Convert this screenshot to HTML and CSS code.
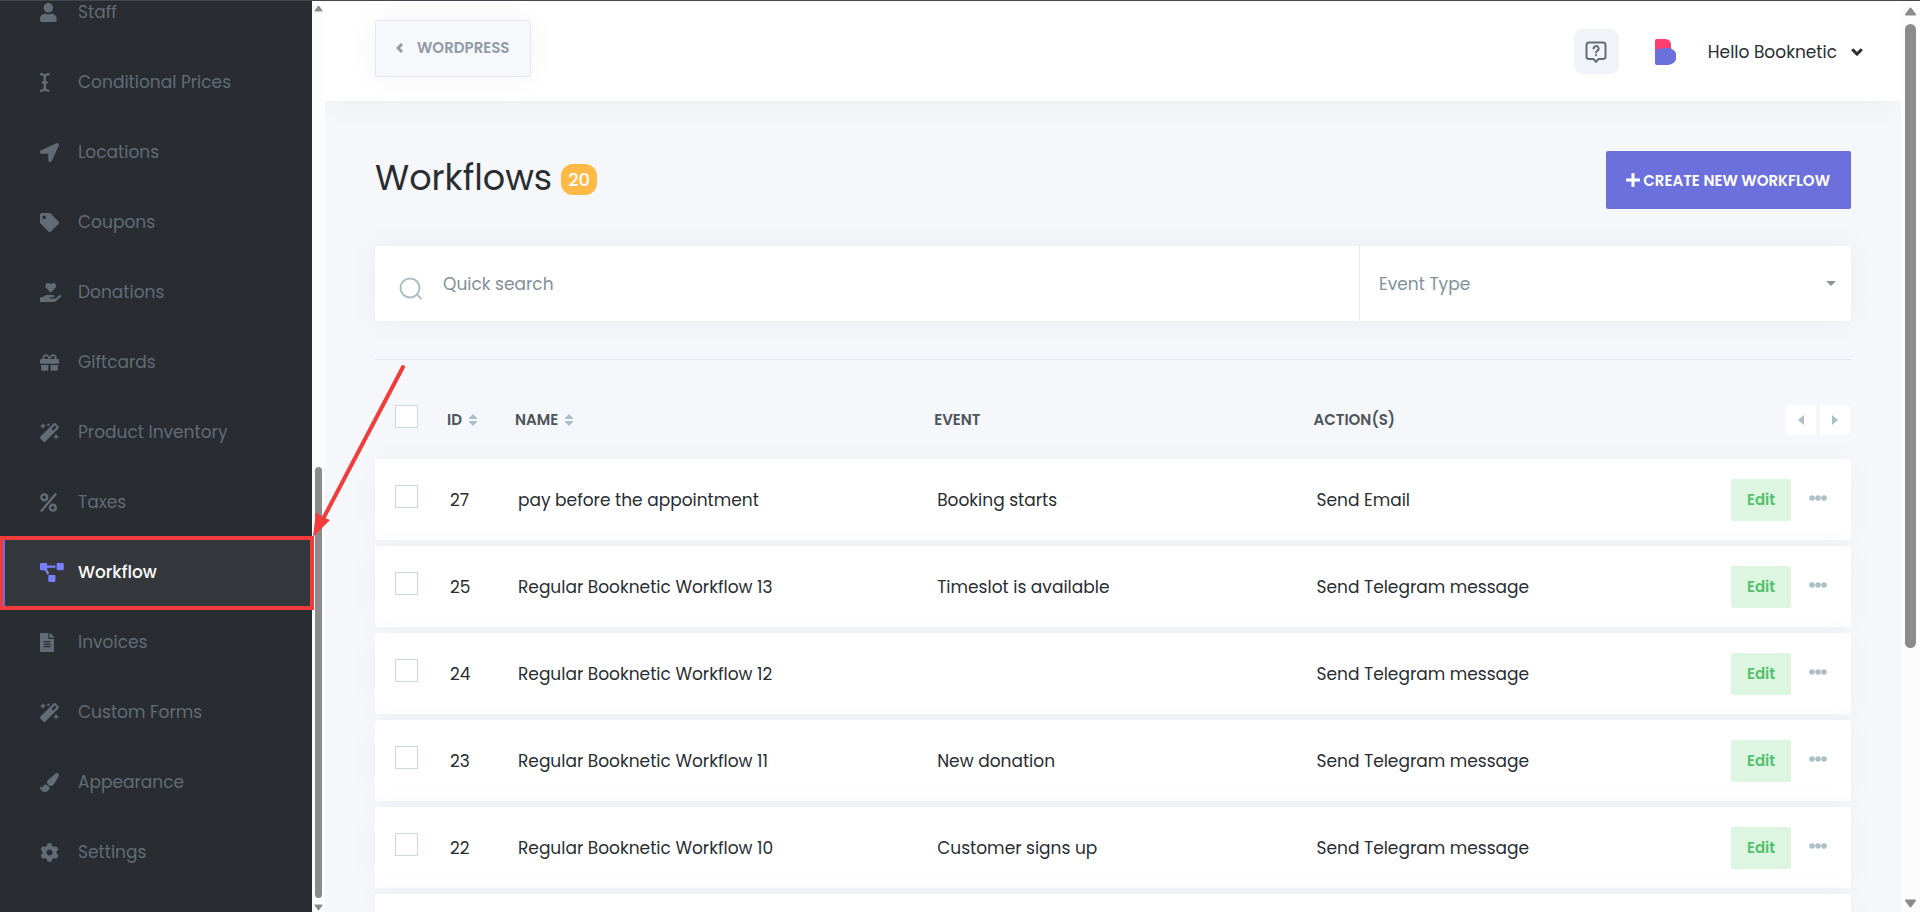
FILE: index.html
```html
<!DOCTYPE html>
<html lang="en">
<head>
    <meta charset="UTF-8">
    <meta name="viewport" content="width=device-width, initial-scale=1.0">
    <title>Booknetic - Workflows</title>
    <link rel="stylesheet" href="styles.css">
</head>
<body>
    <svg class="sprite" aria-hidden="true">
        <symbol id="magic" viewBox="0 0 512 512"><path d="M224 96l16-32 32-16-32-16-16-32-16 32-32 16 32 16 16 32zM80 160l26.66-53.33L160 80l-53.34-26.67L80 0 53.34 53.33 0 80l53.34 26.67L80 160zm352 128l-26.66 53.33L352 368l53.34 26.67L432 448l26.66-53.33L512 368l-53.34-26.67L432 288zm70.62-193.77L417.77 9.38C411.53 3.12 403.34 0 395.15 0c-8.19 0-16.38 3.12-22.63 9.38L9.38 372.52c-12.5 12.5-12.5 32.76 0 45.25l84.85 84.85c6.25 6.25 14.44 9.37 22.62 9.37 8.19 0 16.38-3.12 22.63-9.37l363.14-363.15c12.5-12.48 12.5-32.75 0-45.24zM359.45 203.46l-50.91-50.91 86.6-86.6 50.91 50.91-86.6 86.6z"/></symbol>
        <symbol id="dots" viewBox="0 0 18 6"><circle cx="3" cy="3" r="2.8"/><circle cx="9" cy="3" r="2.8"/><circle cx="15" cy="3" r="2.8"/></symbol>
        <symbol id="sort" viewBox="0 0 10 12"><path d="M5 0l4 4q.8 1-.4 1H1.400Q.2 5 1 4zM5 12l4-4q.8-1-.4-1H1.400Q.2 7 1 8z"/></symbol>
    </svg>

    <div class="app">
        <nav class="sidebar">
            <ul class="menu">
                <li><a href="#"><svg viewBox="0 0 448 512"><path d="M224 256c70.7 0 128-57.3 128-128S294.7 0 224 0 96 57.3 96 128s57.3 128 128 128zm89.6 32h-16.7c-22.2 10.2-46.9 16-72.9 16s-50.6-5.8-72.9-16h-16.7C60.2 288 0 348.2 0 422.4V464c0 26.5 21.5 48 48 48h352c26.5 0 48-21.5 48-48v-41.6c0-74.2-60.2-134.4-134.4-134.4z"/></svg><span>Staff</span></a></li>
                <li><a href="#"><svg viewBox="0 0 256 512"><path d="M256 52.048V12.065C256 5.496 250.726.148 244.158.019 211.621-.613 166.469.011 128 37.959 90.266.736 46.979-.114 11.913.114 5.318.157 0 5.519 0 12.114v39.645c0 6.687 5.458 12.078 12.145 11.998C38.111 63.447 96 67.243 96 112.182V224H60c-6.627 0-12 5.373-12 12v40c0 6.627 5.373 12 12 12h36v112c0 44.932-56.075 48.031-83.95 47.959C5.404 447.942 0 453.306 0 459.952v39.983c0 6.569 5.274 11.917 11.842 12.045 32.537.631 77.689.008 116.158-37.94 37.734 37.223 81.021 38.073 116.087 37.845 6.595-.043 11.913-5.405 11.913-12V460.24c0-6.687-5.458-12.078-12.145-11.998C217.889 448.553 160 444.939 160 400V288h36c6.627 0 12-5.373 12-12v-40c0-6.627-5.373-12-12-12h-36V112.182c0-44.932 56.075-48.213 83.95-48.142 6.646.018 12.05-5.346 12.05-11.992z"/></svg><span>Conditional Prices</span></a></li>
                <li><a href="#"><svg viewBox="0 0 512 512"><path d="M444.52 3.52L28.74 195.42c-47.97 22.39-31.98 92.75 19.19 92.75h175.910v175.910c0 51.17 70.36 67.170 92.750 19.190l191.900-415.780c15.990-38.390-25.590-79.970-63.970-63.970z"/></svg><span>Locations</span></a></li>
                <li><a href="#"><svg viewBox="0 0 512 512"><path d="M0 252.118V48C0 21.49 21.49 0 48 0h204.118a48 48 0 0 1 33.941 14.059l211.882 211.882c18.745 18.745 18.745 49.137 0 67.882L293.823 497.941c-18.745 18.745-49.137 18.745-67.882 0L14.059 286.059A48 48 0 0 1 0 252.118zM112 64c-26.51 0-48 21.49-48 48s21.49 48 48 48 48-21.49 48-48-21.49-48-48-48z"/></svg><span>Coupons</span></a></li>
                <li><a href="#"><svg viewBox="0 0 576 512"><path d="M275.3 250.5c7 7.4 18.4 7.4 25.5 0l108.9-114.2c31.6-33.2 29.8-88.2-5.6-118.8-30.8-26.7-76.7-21.9-104.9 7.7L288 36.9l-11.1-11.6C248.7-4.4 202.8-9.2 172 17.5c-35.3 30.6-37.2 85.6-5.6 118.8l108.9 114.2zm290 77.6c-11.8-10.7-30.2-10-42.6 0L430.3 402c-11.3 9.1-25.4 14-40 14H272c-8.8 0-16-7.2-16-16s7.200-16 16-16h78.3c15.9 0 30.7-10.9 33.3-26.6 3.3-20-12.1-37.4-31.6-37.4H192c-27 0-53.1 9.3-74.1 26.3L71.4 384H16c-8.8 0-16 7.2-16 16v96c0 8.8 7.2 16 16 16h356.8c14.5 0 28.6-4.9 40-14L564 377c15.2-12.1 16.4-35.3 1.3-48.9z"/></svg><span>Donations</span></a></li>
                <li><a href="#"><svg viewBox="0 0 512 512"><path d="M32 448c0 17.7 14.3 32 32 32h160V320H32v128zm256 32h160c17.7 0 32-14.3 32-32V320H288v160zm192-320h-42.1c6.2-12.1 10.1-25.5 10.1-40 0-48.5-39.5-88-88-88-41.6 0-68.5 21.3-103 68.3-34.5-47-61.4-68.3-103-68.3-48.5 0-88 39.5-88 88 0 14.5 3.8 27.9 10.1 40H32c-17.7 0-32 14.3-32 32v80c0 8.8 7.2 16 16 16h480c8.8 0 16-7.2 16-16v-80c0-17.7-14.3-32-32-32zm-326.1 0c-22.1 0-40-17.9-40-40s17.9-40 40-40c19.9 0 34.6 3.3 86.1 80h-86.1zm206.1 0h-86.1c51.4-76.5 65.7-80 86.1-80 22.1 0 40 17.9 40 40s-17.9 40-40 40z"/></svg><span>Giftcards</span></a></li>
                <li><a href="#"><svg viewBox="0 0 512 512"><use href="#magic"/></svg><span>Product Inventory</span></a></li>
                <li><a href="#"><svg class="percent" viewBox="0 0 17 19"><circle cx="4.200" cy="4.300" r="2.900"/><circle cx="12.800" cy="14.700" r="2.900"/><path d="M15.500 1.300L1.500 17.700"/></svg><span>Taxes</span></a></li>
                <li class="active"><a href="#"><svg viewBox="0 0 640 512"><path d="M384 320H256c-17.67 0-32 14.33-32 32v128c0 17.67 14.33 32 32 32h128c17.67 0 32-14.33 32-32V352c0-17.67-14.33-32-32-32zM192 32c0-17.67-14.33-32-32-32H32C14.33 0 0 14.33 0 32v128c0 17.67 14.33 32 32 32h95.72l73.16 128.04C211.98 300.98 232.4 288 256 288h.28L192 175.51V128h224V64H192V32zM608 0H480c-17.67 0-32 14.33-32 32v128c0 17.67 14.33 32 32 32h128c17.67 0 32-14.33 32-32V32c0-17.67-14.33-32-32-32z"/></svg><span>Workflow</span></a>
                    <div class="highlight"></div>
                    <svg class="pointer" viewBox="0 0 96 178" aria-hidden="true"><path d="M91 8L11 160" stroke="#f23b3b" stroke-width="4" stroke-linecap="round"/><path d="M1 178L4 153L10 158L18 161z" fill="#f23b3b"/></svg>
                </li>
                <li><a href="#"><svg viewBox="0 0 384 512"><path d="M224 136V0H24C10.7 0 0 10.7 0 24v464c0 13.3 10.7 24 24 24h336c13.3 0 24-10.7 24-24V160H248c-13.2 0-24-10.8-24-24zm64 236c0 6.6-5.4 12-12 12H108c-6.6 0-12-5.4-12-12v-8c0-6.6 5.4-12 12-12h168c6.6 0 12 5.4 12 12v8zm0-64c0 6.6-5.4 12-12 12H108c-6.6 0-12-5.4-12-12v-8c0-6.6 5.4-12 12-12h168c6.6 0 12 5.4 12 12v8zm0-72v8c0 6.6-5.4 12-12 12H108c-6.6 0-12-5.4-12-12v-8c0-6.6 5.4-12 12-12h168c6.6 0 12 5.4 12 12zm96-114.1v6.1H256V0h6.1c6.4 0 12.5 2.5 17 7l97.9 98c4.5 4.5 7 10.6 7 16.9z"/></svg><span>Invoices</span></a></li>
                <li><a href="#"><svg viewBox="0 0 512 512"><use href="#magic"/></svg><span>Custom Forms</span></a></li>
                <li><a href="#"><svg viewBox="0 0 512 512"><path d="M167.02 309.34c-40.12 2.58-76.53 17.86-97.19 72.3-2.35 6.21-8 9.98-14.59 9.98-11.11 0-45.46-27.67-55.25-34.35C0 439.62 37.93 512 128 512c75.86 0 128-43.77 128-120.19 0-3.11-.65-6.08-.97-9.13l-88.01-73.34zM457.89 0c-15.16 0-29.37 6.71-40.21 16.45C213.27 199.05 192 203.34 192 257.09c0 13.7 3.25 26.76 8.73 38.7l63.82 53.18c7.21 1.8 14.64 3.03 22.39 3.03 62.11 0 98.11-45.47 211.16-256.46 7.38-14.35 13.9-29.85 13.9-45.99C512 20.64 486 0 457.89 0z"/></svg><span>Appearance</span></a></li>
                <li><a href="#"><svg viewBox="0 0 512 512"><path d="M487.4 315.7l-42.6-24.6c4.3-23.2 4.3-47 0-70.2l42.6-24.6c4.9-2.8 7.1-8.6 5.5-14-11.1-35.6-30-67.8-54.7-94.6-3.8-4.1-10-5.1-14.8-2.3L380.8 110c-17.9-15.4-38.5-27.3-60.8-35.1V25.8c0-5.6-3.9-10.5-9.4-11.7-36.7-8.2-74.3-7.8-109.2 0-5.5 1.2-9.4 6.1-9.4 11.7V75c-22.2 7.9-42.8 19.8-60.8 35.1L88.7 85.5c-4.9-2.8-11-1.9-14.8 2.3-24.7 26.7-43.6 58.9-54.7 94.6-1.7 5.4.6 11.2 5.5 14L67.3 221c-4.3 23.2-4.3 47 0 70.2l-42.6 24.6c-4.9 2.8-7.1 8.6-5.5 14 11.1 35.6 30 67.8 54.7 94.6 3.8 4.1 10 5.1 14.8 2.3l42.6-24.6c17.9 15.4 38.5 27.3 60.8 35.1v49.2c0 5.6 3.9 10.5 9.4 11.7 36.7 8.2 74.3 7.8 109.2 0 5.5-1.2 9.4-6.1 9.4-11.7v-49.2c22.2-7.9 42.8-19.8 60.8-35.1l42.6 24.6c4.9 2.8 11 1.9 14.8-2.3 24.7-26.7 43.6-58.9 54.7-94.6 1.5-5.5-.7-11.3-5.6-14.1zM256 336c-44.1 0-80-35.9-80-80s35.9-80 80-80 80 35.9 80 80-35.9 80-80 80z"/></svg><span>Settings</span></a></li>
            </ul>
        </nav>

        <div class="scrollbar menu-scroll" aria-hidden="true">
            <svg viewBox="0 0 14 10"><path d="M6 1q1-1 2 0l5 7q.6 1.500-1 1.500H2Q.4 9.500 1 8z"/></svg>
            <div class="track"><div class="thumb"></div></div>
            <svg class="down" viewBox="0 0 14 10"><path d="M6 1q1-1 2 0l5 7q.6 1.500-1 1.500H2Q.4 9.500 1 8z"/></svg>
        </div>

        <div class="main">
            <header class="topbar">
                <a href="#" class="back-btn"><svg viewBox="0 0 8 10"><path d="M6 1L2 5l4 4"/></svg>WORDPRESS</a>
                <div class="account">
                    <button type="button" class="help-btn" aria-label="Help">
                        <svg viewBox="0 0 22 22"><path d="M4 1.500h14a2.500 2.500 0 0 1 2.500 2.500v11.500a2.500 2.500 0 0 1-2.500 2.500h-4.500L11 20.800 8.500 18H4a2.500 2.500 0 0 1-2.500-2.500V4A2.500 2.500 0 0 1 4 1.500z"/><path d="M8.600 7.600a2.500 2.500 0 1 1 3.700 2.200c-.9.500-1.300.8-1.300 1.600M11 14v.2"/></svg>
                    </button>
                    <svg class="logo" viewBox="0 0 21 26" role="img" aria-label="Booknetic"><path fill="#fb3e6e" d="M2 0h8.500A5.500 5.500 0 0 1 16 5.500V10H0V2a2 2 0 0 1 2-2z"/><path fill="#6c70dc" d="M0 10h5.500Q7 9 9 9h4a8.500 8.500 0 0 1 0 17H2a2 2 0 0 1-2-2z"/></svg>
                    <button type="button" class="user-btn">Hello Booknetic<svg viewBox="0 0 12 8"><path d="M1.200 1.200L6 6l4.800-4.800"/></svg></button>
                </div>
            </header>

            <main class="content">
                <div class="page-head">
                    <h1>Workflows <span class="badge">20</span></h1>
                    <button type="button" class="create-btn"><svg viewBox="0 0 14 14"><path d="M7 1v12M1 7h12"/></svg>CREATE NEW WORKFLOW</button>
                </div>

                <form class="filters">
                    <label class="search">
                        <svg viewBox="0 0 24 24"><circle cx="11" cy="11" r="9.500"/><path d="M17.500 17l5 5"/></svg>
                        <input type="text" placeholder="Quick search" aria-label="Quick search">
                    </label>
                    <div class="event-filter">
                        <select aria-label="Event Type">
                            <option>Event Type</option>
                        </select>
                        <svg viewBox="0 0 10 5"><path d="M0 0h10L5 5z"/></svg>
                    </div>
                </form>

                <table class="workflows">
                    <thead>
                        <tr>
                            <th class="col-check"><input type="checkbox" aria-label="Select all"></th>
                            <th class="col-id">ID <svg><use href="#sort"/></svg></th>
                            <th class="col-name">NAME <svg><use href="#sort"/></svg></th>
                            <th class="col-event">EVENT</th>
                            <th>ACTION(S)</th>
                            <th class="col-tools">
                                <div class="pager">
                                    <button type="button" aria-label="Scroll left"><svg viewBox="0 0 6 10"><path d="M6 0v10L0 5z"/></svg></button>
                                    <button type="button" aria-label="Scroll right"><svg viewBox="0 0 6 10"><path d="M0 0v10l6-5z"/></svg></button>
                                </div>
                            </th>
                        </tr>
                    </thead>
                    <tbody>
                        <tr>
                            <td><input type="checkbox" aria-label="Select 27"></td>
                            <td>27</td>
                            <td>pay before the appointment</td>
                            <td>Booking starts</td>
                            <td>Send Email</td>
                            <td><div class="tools"><button type="button" class="edit-btn">Edit</button><button type="button" class="more-btn" aria-label="More"><svg><use href="#dots"/></svg></button></div></td>
                        </tr>
                        <tr>
                            <td><input type="checkbox" aria-label="Select 25"></td>
                            <td>25</td>
                            <td>Regular Booknetic Workflow 13</td>
                            <td>Timeslot is available</td>
                            <td>Send Telegram message</td>
                            <td><div class="tools"><button type="button" class="edit-btn">Edit</button><button type="button" class="more-btn" aria-label="More"><svg><use href="#dots"/></svg></button></div></td>
                        </tr>
                        <tr>
                            <td><input type="checkbox" aria-label="Select 24"></td>
                            <td>24</td>
                            <td>Regular Booknetic Workflow 12</td>
                            <td></td>
                            <td>Send Telegram message</td>
                            <td><div class="tools"><button type="button" class="edit-btn">Edit</button><button type="button" class="more-btn" aria-label="More"><svg><use href="#dots"/></svg></button></div></td>
                        </tr>
                        <tr>
                            <td><input type="checkbox" aria-label="Select 23"></td>
                            <td>23</td>
                            <td>Regular Booknetic Workflow 11</td>
                            <td>New donation</td>
                            <td>Send Telegram message</td>
                            <td><div class="tools"><button type="button" class="edit-btn">Edit</button><button type="button" class="more-btn" aria-label="More"><svg><use href="#dots"/></svg></button></div></td>
                        </tr>
                        <tr>
                            <td><input type="checkbox" aria-label="Select 22"></td>
                            <td>22</td>
                            <td>Regular Booknetic Workflow 10</td>
                            <td>Customer signs up</td>
                            <td>Send Telegram message</td>
                            <td><div class="tools"><button type="button" class="edit-btn">Edit</button><button type="button" class="more-btn" aria-label="More"><svg><use href="#dots"/></svg></button></div></td>
                        </tr>
                        <tr class="empty">
                            <td colspan="6"></td>
                        </tr>
                    </tbody>
                </table>
            </main>
        </div>

        <div class="scrollbar page-scroll" aria-hidden="true">
            <svg viewBox="0 0 14 10"><path d="M6 1q1-1 2 0l5 7q.6 1.500-1 1.500H2Q.4 9.500 1 8z"/></svg>
            <div class="track"><div class="thumb"></div></div>
            <svg class="down" viewBox="0 0 14 10"><path d="M6 1q1-1 2 0l5 7q.6 1.500-1 1.500H2Q.4 9.500 1 8z"/></svg>
        </div>
    </div>
</body>
</html>
```
FILE: styles.css
```css
* {
    margin: 0;
    padding: 0;
    box-sizing: border-box;
}

body {
    font-family: Poppins, Inter, 'Open Sans', sans-serif;
    font-size: 17px;
    color: #292d32;
    background: #f5f7fb;
    border-top: 1px solid #44464f;
    height: 100vh;
    overflow: hidden;
}

button, input, select {
    font: inherit;
    border: none;
    outline: none;
}

button {
    cursor: pointer;
}

a {
    text-decoration: none;
}

.sprite {
    display: none;
}

.app {
    display: flex;
    height: 100%;
}

/* Sidebar */
.sidebar {
    width: 312px;
    flex-shrink: 0;
    background: #292d32;
    display: flex;
    flex-direction: column;
    justify-content: flex-end;
    padding-bottom: 25px;
}

.menu {
    list-style: none;
}

.menu li {
    position: relative;
}

.menu a {
    display: flex;
    align-items: center;
    height: 70px;
    padding-left: 40px;
    color: #626c76;
}

.menu a svg {
    height: 19px;
    fill: currentColor;
}

.menu a span {
    position: absolute;
    left: 78px;
}

.menu .percent {
    fill: none;
    stroke: currentColor;
    stroke-width: 2.4;
    stroke-linecap: round;
}

.menu .active {
    z-index: 2;
}

.menu .active a {
    background: #34373c;
    color: #fff;
    font-weight: 500;
}

.menu .active a svg {
    fill: #7a7fff;
}

.highlight {
    position: absolute;
    inset: -1px -2px -3px 0;
    border: 4px solid #f23b3b;
    border-left-width: 3px;
    box-shadow: inset 2px 0 #6c70dc;
}

.pointer {
    position: absolute;
    left: 312px;
    bottom: 70px;
    width: 96px;
    height: 178px;
    fill: none;
}

/* Scrollbars */
.scrollbar {
    display: flex;
    flex-direction: column;
    align-items: center;
    flex-shrink: 0;
    background: #fcfcfc;
}

.scrollbar svg {
    fill: #8b8b8b;
}

.scrollbar .down {
    transform: rotate(180deg);
}

.scrollbar .track {
    flex: 1;
    display: flex;
    flex-direction: column;
}

.scrollbar .thumb {
    background: #8b8b8b;
    border-radius: 6px;
}

.menu-scroll {
    width: 13px;
    padding: 4px 0 1px;
    gap: 6px;
}

.menu-scroll svg {
    width: 9px;
    height: 7px;
}

.menu-scroll .track {
    width: 7px;
    justify-content: flex-end;
}

.menu-scroll .thumb {
    height: 49%;
}

.page-scroll {
    width: 19px;
    padding: 6px 0 4px;
    gap: 8px;
}

.page-scroll svg {
    width: 13px;
    height: 9px;
}

.page-scroll .track {
    width: 11px;
}

.page-scroll .thumb {
    height: 72%;
}

/* Top bar */
.main {
    flex: 1;
    min-width: 0;
    overflow: hidden;
}

.topbar {
    display: flex;
    justify-content: space-between;
    align-items: flex-start;
    height: 100px;
    padding: 19px 38px 0 50px;
    background: #fff;
    box-shadow: 0 0 30px rgba(0, 0, 0, 0.05);
}

.back-btn {
    display: flex;
    align-items: center;
    gap: 13px;
    height: 57px;
    padding: 0 20px 2px;
    border: 1px solid #e1e8f5;
    border-radius: 2px;
    background: #f7f8fc;
    box-shadow: 0 0 30px rgba(0, 0, 0, 0.05);
    color: #8f9ca7;
    font-size: 15px;
    font-weight: 600;
}

.back-btn svg {
    width: 8px;
    height: 10px;
    fill: none;
    stroke: currentColor;
    stroke-width: 3;
}

.account {
    display: flex;
    align-items: center;
    padding-top: 9px;
}

.help-btn {
    display: flex;
    align-items: center;
    justify-content: center;
    width: 45px;
    height: 45px;
    border-radius: 9px;
    background: #f0f4f9;
}

.help-btn svg {
    width: 22px;
    height: 22px;
    fill: none;
    stroke: #626c76;
    stroke-width: 2;
    stroke-linecap: round;
}

.logo {
    width: 21px;
    height: 26px;
    margin: 0 32px 0 36px;
}

.user-btn {
    display: flex;
    align-items: center;
    gap: 14px;
    background: none;
    color: #292d32;
}

.user-btn svg {
    width: 12px;
    height: 8px;
    fill: none;
    stroke: currentColor;
    stroke-width: 3;
}

/* Page */
.content {
    padding: 50px 50px 0;
}

.page-head {
    display: flex;
    justify-content: space-between;
    align-items: center;
    height: 58px;
}

h1 {
    display: flex;
    align-items: center;
    gap: 9px;
    padding-bottom: 6px;
    font-size: 35px;
    font-weight: 400;
}

.badge {
    margin-top: 5px;
    padding: 0 7px;
    border-radius: 12px;
    background: #ffb945;
    color: #fff;
    font-size: 18px;
    font-weight: 500;
    line-height: 31px;
}

.create-btn {
    display: flex;
    align-items: center;
    gap: 3px;
    height: 58px;
    padding: 0 21px 0 20px;
    border-radius: 2px;
    background: #6c70dc;
    color: #fff;
    font-size: 15px;
    font-weight: 600;
}

.create-btn svg {
    width: 14px;
    height: 14px;
    stroke: currentColor;
    stroke-width: 3;
    stroke-linecap: round;
}

.filters {
    display: grid;
    grid-template-columns: 2fr 1fr;
    margin-top: 37px;
    height: 75px;
    border-radius: 2px;
    background: #fff;
    box-shadow: 0 0 30px rgba(0, 0, 0, 0.05);
}

.search {
    display: flex;
    align-items: center;
    gap: 20px;
    padding: 0 24px;
}

.search svg {
    width: 24px;
    height: 24px;
    margin-top: 10px;
    fill: none;
    stroke: #adbfc7;
    stroke-width: 2;
}

.search input {
    flex: 1;
    background: none;
}

.search input::placeholder {
    color: #828f9a;
}

.event-filter {
    position: relative;
    border-left: 1px solid #e3eaf3;
}

.event-filter select {
    width: 100%;
    height: 100%;
    padding: 0 19px;
    appearance: none;
    background: none;
    color: #828f9a;
}

.event-filter svg {
    position: absolute;
    right: 15px;
    top: 35px;
    width: 10px;
    height: 5px;
    fill: #8f9396;
}

/* Table */
.workflows {
    width: 100%;
    margin-top: 38px;
    border-top: 1px solid #e3e7ee;
    border-spacing: 0 6px;
    table-layout: fixed;
    text-align: left;
}

.workflows th {
    height: 87px;
    padding-top: 20px;
    vertical-align: middle;
    color: #4d545c;
    font-size: 15px;
    font-weight: 600;
}

.workflows th svg {
    width: 10px;
    height: 12px;
    margin-left: 2px;
    fill: #adbfc7;
    vertical-align: -1px;
}

.col-check {
    width: 72px;
}

.col-id {
    width: 68px;
}

.col-name {
    width: 28.4%;
}

.col-event {
    width: 25.7%;
}

.col-tools {
    width: 180px;
}

.workflows input {
    display: block;
    width: 23px;
    height: 23px;
    margin: 0 0 6px 20px;
    appearance: none;
    background: #fff;
    border: 1px solid #cdd8dd;
}

.pager {
    display: flex;
    justify-content: flex-end;
    gap: 4px;
    padding-right: 1px;
}

.pager button {
    display: flex;
    align-items: center;
    justify-content: center;
    width: 30px;
    height: 30px;
    border-radius: 2px;
    background: #fff;
}

.workflows .pager svg {
    width: 6px;
    height: 10px;
    margin: 0;
}

.workflows tbody tr {
    border-radius: 4px;
    box-shadow: 0 0 30px rgba(0, 0, 0, 0.03);
}

.workflows td {
    height: 81px;
    padding-left: 3px;
    background: #fff;
}

.workflows td:first-child {
    padding-left: 0;
    border-radius: 3px 0 0 3px;
}

.workflows td:last-child {
    border-radius: 0 3px 3px 0;
}

.tools {
    display: flex;
    justify-content: flex-end;
    align-items: center;
    gap: 18px;
    padding-right: 24px;
}

.edit-btn {
    width: 60px;
    height: 42px;
    border-radius: 2px;
    background: #ddf6e1;
    color: #53c16b;
    font-size: 15px;
    font-weight: 600;
}

.more-btn {
    display: flex;
    padding-bottom: 3px;
    background: none;
}

.more-btn svg {
    width: 18px;
    height: 6px;
    fill: #adbfc7;
}
```
